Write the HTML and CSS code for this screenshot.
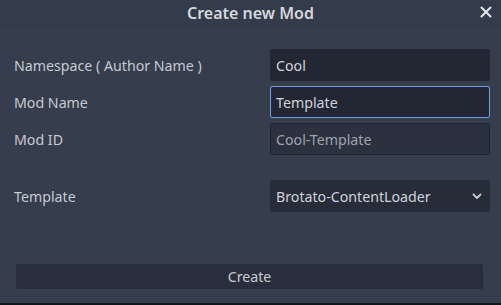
FILE: index.html
```html
<!DOCTYPE html>
<html>
<head>
<meta charset="utf-8">
<link rel="stylesheet" href="styles.css">
</head>
<body>
<div class="dialog">
  <div class="header">
    <span class="title">Create new Mod</span>
    <svg class="close" width="12" height="12" viewBox="0 0 12 12"><path d="M1.5 1.5 L10.5 10.5 M10.5 1.5 L1.5 10.5" stroke="#e4e6ea" stroke-width="2" stroke-linecap="round"/></svg>
  </div>
  <div class="form">
    <label class="label">Namespace ( Author Name )</label>
    <div class="field">Cool</div>
    <label class="label">Mod Name</label>
    <div class="field focus">Template</div>
    <label class="label">Mod ID</label>
    <div class="field readonly">Cool-Template</div>
    <div class="spacer"></div>
    <div class="spacer"></div>
    <label class="label">Template</label>
    <div class="field select"><span>Brotato-ContentLoader</span>
      <svg class="chev" width="10" height="7" viewBox="0 0 10 7"><path d="M1.5 1.5 L5 5 L8.5 1.5" stroke="#c9ccd2" stroke-width="1.8" fill="none" stroke-linecap="round" stroke-linejoin="round"/></svg>
    </div>
  </div>
  <div class="actions">
    <div class="button">Create</div>
  </div>
  <div class="bottom"></div>
</div>
</body>
</html>
```
FILE: styles.css
```css
html, body {
  margin: 0;
  padding: 0;
  background: #363d4d;
}
.dialog {
  width: 501px;
  height: 305px;
  display: flex;
  flex-direction: column;
  font-family: "Noto Sans", "DejaVu Sans", sans-serif;
  color: #c9ccd3;
  background: #363d4d;
  overflow: hidden;
}
.header {
  height: 26px;
  display: flex;
  align-items: center;
  justify-content: center;
  position: relative;
  background: #343b4b;
}
.title {
  font-size: 16px;
  font-weight: 600;
  color: #d4d7dc;
}
.close {
  position: absolute;
  right: 9px;
  top: 6px;
}
.form {
  margin-top: 23px;
  padding: 0 11px 0 14px;
  display: grid;
  grid-template-columns: 1fr 220px;
  row-gap: 5px;
  align-items: center;
}
.label {
  font-size: 14.2px;
  color: #c6cad1;
}
.spacer {
  height: 15px;
}
.field {
  height: 32px;
  box-sizing: border-box;
  background: #222733;
  border: 1px solid #222733;
  border-radius: 2px;
  padding: 0 5px;
  display: flex;
  align-items: center;
  font-size: 14.2px;
  color: #d0d3d9;
}
.field.focus {
  border-color: #6d9ee6;
}
.field.readonly {
  background: #2b313e;
  border-color: #202530;
  color: #9ea3ac;
}
.field.select {
  background: #272c39;
  border-color: #272c39;
  justify-content: space-between;
  padding-right: 7px;
}
.actions {
  flex: 1;
  display: flex;
  align-items: flex-end;
  padding: 0 18px 14px 16px;
}
.button {
  flex: 1;
  height: 25px;
  background: #292e3c;
  border-radius: 2px;
  display: flex;
  align-items: center;
  justify-content: center;
  font-size: 14.2px;
  color: #c9ccd3;
}
.bottom {
  height: 2px;
  background: #15171c;
}
```
